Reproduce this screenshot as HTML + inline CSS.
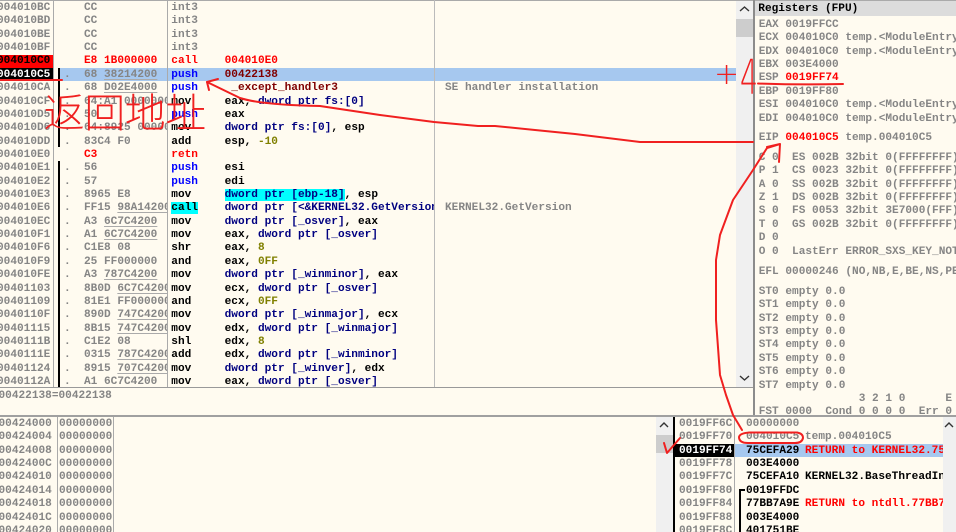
<!DOCTYPE html>
<html><head><meta charset="utf-8"><style>
html,body{margin:0;padding:0;background:#fffbf0}
#p{position:relative;width:956px;height:532px;overflow:hidden;background:#fffbf0;font-family:"Liberation Mono",monospace;font-size:11.11px;font-weight:bold;color:#000}
.c{position:absolute;white-space:pre;line-height:13.36px;overflow:hidden}
.r{position:absolute}
.g{color:#858585}.k{color:#000}.red{color:#f00}.b{color:#00f}.n{color:#000080}.o{color:#808000}.m{color:#800000}.w{color:#fff}
.u{text-decoration:underline;text-decoration-color:#aaa;text-underline-offset:2px}
.cy{background:#0ff}
#t{position:absolute;inset:0;filter:blur(.3px)}
svg{position:absolute;left:0;top:0}
</style></head><body><div id="p">
<div class="r" style="left:0;top:0;width:956px;height:1px;background:#aaa"></div>
<div class="r" style="left:0;top:55px;width:53px;height:13px;background:#f00"></div>
<div class="r" style="left:0;top:68px;width:53px;height:13px;background:#000"></div>
<div class="r" style="left:59px;top:68px;width:677px;height:13px;background:#a6c8ef"></div>
<div class="r" style="left:53px;top:0;width:1px;height:387px;background:#aaa"></div>
<div class="r" style="left:167px;top:0;width:1px;height:387px;background:#aaa"></div>
<div class="r" style="left:434px;top:0;width:1px;height:387px;background:#bbb"></div>
<div class="r" style="left:58px;top:68px;width:2px;height:79px;background:#000"></div>
<div class="r" style="left:58px;top:161px;width:2px;height:226px;background:#000"></div>
<div class="r" style="left:736px;top:1px;width:17px;height:386px;background:#f0f0f0"></div>
<div class="r" style="left:736px;top:19px;width:17px;height:18px;background:#cdcdcd"></div>
<div class="r" style="left:0;top:387px;width:753px;height:1px;background:#999"></div>
<div class="r" style="left:753px;top:0;width:2px;height:416px;background:#8c8c8c"></div>
<div class="r" style="left:755px;top:1px;width:201px;height:15px;background:#dcdcdc"></div>
<div class="r" style="left:0;top:415px;width:956px;height:2px;background:#a0a0a0"></div>
<div class="r" style="left:57px;top:417px;width:1px;height:115px;background:#aaa"></div>
<div class="r" style="left:113px;top:417px;width:1px;height:115px;background:#aaa"></div>
<div class="r" style="left:656px;top:417px;width:17px;height:115px;background:#f0f0f0"></div>
<div class="r" style="left:656px;top:435px;width:17px;height:18px;background:#cdcdcd"></div>
<div class="r" style="left:673px;top:417px;width:2px;height:115px;background:#000"></div>
<div class="r" style="left:675px;top:444px;width:59px;height:13px;background:#000"></div>
<div class="r" style="left:735px;top:444px;width:208px;height:13px;background:#a6c8ef"></div>
<div class="r" style="left:734px;top:417px;width:1px;height:115px;background:#aaa"></div>
<div class="r" style="left:943px;top:417px;width:13px;height:115px;background:#f0f0f0"></div>
<div class="r" style="left:739px;top:489px;width:2px;height:43px;background:#000"></div>
<div class="r" style="left:739px;top:489px;width:6px;height:2px;background:#000"></div>

<div id="t">
<div class="c g" style="left:-3px;top:2px;width:56px;height:385px">004010BC
004010BD
004010BE
004010BF
<span class="k">004010C0</span>
<span class="w">004010C5</span>
004010CA
004010CF
004010D5
004010D6
004010DD
004010E0
004010E1
004010E2
004010E3
004010E6
004010EC
004010F1
004010F6
004010F9
004010FE
00401103
00401109
0040110F
00401115
0040111B
0040111E
00401124
0040112A</div>
<div class="c g" style="left:64px;top:2px;width:103px;height:385px">   CC
   CC
   CC
   CC
   <span class="red">E8 1B000000</span>
.  68 <span class="u">38214200</span>
.  68 <span class="u">D02E4000</span>
.  64:A1 00000000
.  50
.  64:8925 00000000
.  83C4 F0
   <span class="red">C3</span>
.  56
.  57
.  8965 E8
.  FF15 <span class="u">98A14200</span>
.  A3 <span class="u">6C7C4200</span>
.  A1 <span class="u">6C7C4200</span>
.  C1E8 08
.  25 FF000000
.  A3 <span class="u">787C4200</span>
.  8B0D <span class="u">6C7C4200</span>
.  81E1 FF000000
.  890D <span class="u">747C4200</span>
.  8B15 <span class="u">747C4200</span>
.  C1E2 08
.  0315 <span class="u">787C4200</span>
.  8915 <span class="u">707C4200</span>
.  A1 6C7C4200</div>
<div class="c" style="left:171.3px;top:2px;width:263px;height:385px"><span class="g">int3
int3
int3
int3</span>
<span class="red">call    004010E0</span>
<span class="b">push</span>    <span class="m">00422138</span>
<span class="b">push</span>    <span class="m"> _except_handler3</span>
mov     eax, <span class="n">dword ptr fs:[0]</span>
<span class="b">push</span>    eax
mov     <span class="n">dword ptr fs:[0]</span>, esp
add     esp, <span class="o">-10</span>
<span class="red">retn</span>
<span class="b">push</span>    esi
<span class="b">push</span>    edi
mov     <span class="n cy">dword ptr [ebp-18]</span>, esp
<span class="cy">call</span>    <span class="n">dword ptr [&lt;&amp;KERNEL32.GetVersion&gt;]</span>
mov     <span class="n">dword ptr [_osver]</span>, eax
mov     eax, <span class="n">dword ptr [_osver]</span>
shr     eax, <span class="o">8</span>
and     eax, <span class="o">0FF</span>
mov     <span class="n">dword ptr [_winminor]</span>, eax
mov     ecx, <span class="n">dword ptr [_osver]</span>
and     ecx, <span class="o">0FF</span>
mov     <span class="n">dword ptr [_winmajor]</span>, ecx
mov     edx, <span class="n">dword ptr [_winmajor]</span>
shl     edx, <span class="o">8</span>
add     edx, <span class="n">dword ptr [_winminor]</span>
mov     <span class="n">dword ptr [_winver]</span>, edx
mov     eax, <span class="n">dword ptr [_osver]</span></div>
<div class="c g" style="left:445px;top:82px;width:290px">SE handler installation</div>
<div class="c g" style="left:445px;top:202px;width:290px">KERNEL32.GetVersion</div>
<div class="c g" style="left:-1.5px;top:390px;width:300px">00422138=00422138</div>

<div class="c k" style="left:758.3px;top:3.4px;width:190px">Registers (FPU)</div>
<div class="c g" style="left:758.7px;top:19px;width:197px">EAX 0019FFCC
ECX 004010C0 temp.&lt;ModuleEntryPoint&gt;
EDX 004010C0 temp.&lt;ModuleEntryPoint&gt;
EBX 003E4000
ESP <span class="red">0019FF74</span>
EBP 0019FF80
ESI 004010C0 temp.&lt;ModuleEntryPoint&gt;
EDI 004010C0 temp.&lt;ModuleEntryPoint&gt;</div>
<div class="c g" style="left:758.7px;top:132px;width:197px">EIP <span class="red">004010C5</span> temp.004010C5</div>
<div class="c g" style="left:758.7px;top:152px;width:197px">C 0  ES 002B 32bit 0(FFFFFFFF)
P 1  CS 0023 32bit 0(FFFFFFFF)
A 0  SS 002B 32bit 0(FFFFFFFF)
Z 1  DS 002B 32bit 0(FFFFFFFF)
S 0  FS 0053 32bit 3E7000(FFF)
T 0  GS 002B 32bit 0(FFFFFFFF)
D 0
O 0  LastErr ERROR_SXS_KEY_NOT_FOUND</div>
<div class="c g" style="left:758.7px;top:266px;width:197px">EFL 00000246 (NO,NB,E,BE,NS,PE,GE,LE)</div>
<div class="c g" style="left:758.7px;top:286px;width:197px;height:129px">ST0 empty 0.0
ST1 empty 0.0
ST2 empty 0.0
ST3 empty 0.0
ST4 empty 0.0
ST5 empty 0.0
ST6 empty 0.0
ST7 empty 0.0
               3 2 1 0      E S P U O Z D I
FST 0000  Cond 0 0 0 0  Err 0 0 1 0 0 0 0 0 (GT)</div>

<div class="c g" style="left:-1.5px;top:418px;width:58px;height:114px">00424000
00424004
00424008
0042400C
00424010
00424014
00424018
0042401C
00424020</div>
<div class="c g" style="left:59px;top:418px;width:54px;height:114px">00000000
00000000
00000000
00000000
00000000
00000000
00000000
00000000
00000000</div>
<div class="c g" style="left:679px;top:418px;width:55px;height:114px">0019FF6C
0019FF70
<span class="w">0019FF74</span>
0019FF78
0019FF7C
0019FF80
0019FF84
0019FF88
0019FF8C</div>
<div class="c k" style="left:746px;top:418px;width:57px;height:114px"><span class="g">00000000</span>
<span class="g">004010C5</span>
75CEFA29
003E4000
75CEFA10
0019FFDC
77BB7A9E
003E4000
401751BE</div>
<div class="c" style="left:805px;top:418px;width:138px;height:114px">
<span class="g">temp.004010C5</span>
<span class="red">RETURN to KERNEL32.75CEFA29</span>

KERNEL32.BaseThreadInitThunk

<span class="red">RETURN to ntdll.77BB7A9E</span></div>
</div>

<svg width="956" height="532" fill="none">
<g stroke="#333" stroke-width="1.4">
<polyline points="740,11 744.5,7 749,11"/>
<polyline points="740,376 744.5,380 749,376"/>
<polyline points="660,427 664,423 668,427"/>
<polyline points="945,427 949,423 953,427"/>
</g>
<g stroke="#f02020" stroke-width="2" stroke-linecap="round" stroke-linejoin="round">
<path d="M0,80 H62"/>
<path d="M758,83.5 Q800,85 843,84"/>
<path d="M207,82 L240,98 Q262,105 320,106 L380,115 L434,122 L478,126 L495,126 L535,130 L575,134 L640,142 H753"/>
<path d="M218,79 L207,82 L209,90"/>
<path d="M742,430 L733,415 L726,395 L720,375 L716,320 L716,260 L720,235 L733,200 L753,170 L767,148 L780,144 M767,147 L780,144 L779,162"/>
<path d="M739,437 Q740,433 750,432.5 L796,432.5 Q803,433 803,438 Q802,443 795,443 L748,443 Q739,443 739,437 Z"/>
<path d="M664,443 L667,453 L680,438"/>
</g>
<text x="44" y="127" fill="#f02020" stroke="#f02020" stroke-width=".7" font-family="'Noto Sans CJK SC','WenQuanYi Zen Hei',sans-serif" font-size="40" font-weight="100" textLength="162" lengthAdjust="spacingAndGlyphs">返回地址</text>
<text x="714" y="84" fill="#f02020" font-family="'DejaVu Sans',sans-serif" font-size="30" font-weight="200">+</text>
<text x="740" y="94" fill="#f02020" font-family="'DejaVu Sans',sans-serif" font-size="48" font-weight="200" textLength="18" lengthAdjust="spacingAndGlyphs">4</text>
</svg>
</div></body></html>
